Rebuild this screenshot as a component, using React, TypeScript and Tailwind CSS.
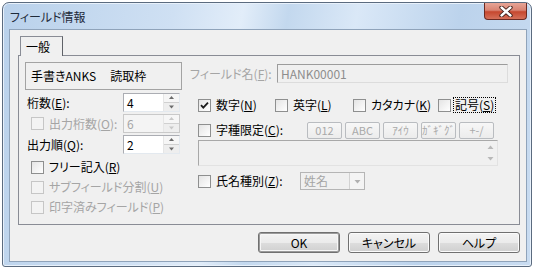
import React from "react";

const FONT = "font-['Noto_Sans_CJK_JP','Noto_Sans_CJK_SC',sans-serif] [font-feature-settings:'palt']";

function Check({ checked = false, disabled = false }: { checked?: boolean; disabled?: boolean }) {
  return (
    <span
      className={
        disabled
          ? "w-[13px] h-[13px] shrink-0 border border-[#c6c6c6] bg-[#f3f3f3] flex items-center justify-center"
          : "w-[13px] h-[13px] shrink-0 border border-[#8e8f8f] bg-[linear-gradient(135deg,#e4e4e4,#ffffff)] flex items-center justify-center"
      }
    >
      {checked && (
        <svg width="9" height="9" viewBox="0 0 9 9">
          <path d="M1 4.2 L3.3 6.6 L8 1.6" fill="none" stroke="#1b1b1b" strokeWidth="1.8" />
        </svg>
      )}
    </span>
  );
}

function Spin({ value, disabled = false }: { value: string; disabled?: boolean }) {
  const arrow = disabled ? "#c8c8c8" : "#6b6b6b";
  return (
    <div
      className={
        disabled
          ? "flex w-[57px] h-[19px] border border-[#c9c9c9] bg-[#f4f4f4] mr-[2px]"
          : "flex w-[57px] h-[19px] border border-[#abadb3] border-r-[#e3e9ef] border-b-[#e3e9ef] bg-white mr-[2px]"
      }
    >
      <div className={disabled ? "flex-1 pl-[3px] leading-[17px] text-[#a5a5a5]" : "flex-1 pl-[3px] leading-[17px] text-black"}>
        {value}
      </div>
      <div className="w-[16px] flex flex-col border-l border-[#e6e6e6]">
        <div className="flex-1 flex flex-col items-center justify-center bg-[#f6f6f6]">
          <svg width="7" height="6" viewBox="0 0 7 6">
            <path d="M3.5 1 L6 4 L1 4 Z" fill={arrow} />
          </svg>
        </div>
        <div className="h-px bg-[#d0d0d0]" />
        <div className="flex-1 flex flex-col items-center justify-center bg-[#eeeeee]">
          <svg width="7" height="6" viewBox="0 0 7 6">
            <path d="M1 1.5 L6 1.5 L3.5 4.5 Z" fill={arrow} />
          </svg>
        </div>
      </div>
    </div>
  );
}

function SmallBtn({ label }: { label: string }) {
  return (
    <div className="w-[35px] h-[17px] rounded-[2px] border border-[#b9bcc0] bg-[linear-gradient(#f7f7f7,#ececec)] text-[#a9a9a9] text-[11px] leading-[15px] flex items-center justify-center whitespace-nowrap">
      {label}
    </div>
  );
}

function DlgBtn({ label, primary = false }: { label: string; primary?: boolean }) {
  return (
    <div
      className={
        primary
          ? "w-[82px] h-[21px] rounded-[3px] border border-[#707070] shadow-[inset_0_0_0_1px_#9a9a9a,inset_0_0_0_2px_#f6f6f6] bg-[linear-gradient(#f3f3f3_0%,#ebebeb_50%,#dddddd_51%,#cfcfcf_100%)] flex items-center justify-center text-black"
          : "w-[82px] h-[21px] rounded-[3px] border border-[#707070] shadow-[inset_0_0_0_1px_#fbfbfb] bg-[linear-gradient(#f3f3f3_0%,#ebebeb_50%,#dddddd_51%,#cfcfcf_100%)] flex items-center justify-center text-black"
      }
    >
      {label}
    </div>
  );
}

export default function App() {
  return (
    <div className={`w-[537px] h-[269px] bg-white pl-[2px] pt-[2px] text-[12px] leading-[14px] text-black ${FONT}`}>
      <div className="w-[530px] h-[265px] rounded-t-[7px] rounded-b-[3px] border border-[#5b6b7f] bg-[linear-gradient(100deg,#b9d1eb_0%,#cfe0f3_30%,#e2edf9_42%,#c3d8ee_50%,#dae8f7_62%,#bcd3ec_80%,#c9dcf1_100%)] flex flex-col shadow-[inset_0_0_0_1px_#e8f1fb]">
        {/* title bar */}
        <div className="h-[26px] relative flex items-center pl-[7px]">
          <span className="text-[12px] text-[#1e2a3a] pt-[2px]">フィールド情報</span>
          <div className="absolute right-[4px] top-0 w-[43px] h-[17px] rounded-b-[4px] border border-t-0 border-[#6b2a22] bg-[linear-gradient(#e7a597_0%,#d98473_45%,#c6482f_55%,#d5705a_100%)] flex items-center justify-center">
            <svg width="14" height="11" viewBox="0 0 14 11">
              <path d="M2.5 1.5 L11.5 9.5 M11.5 1.5 L2.5 9.5" stroke="#3a1a14" strokeWidth="4.2" strokeLinecap="round" />
              <path d="M2.5 1.5 L11.5 9.5 M11.5 1.5 L2.5 9.5" stroke="#ffffff" strokeWidth="2.4" strokeLinecap="round" />
            </svg>
          </div>
        </div>

        {/* client area */}
        <div className="ml-[6px] mr-[4px] h-[233px] border border-[#8fa3ba] bg-[#f0f0f0] flex flex-col">
          {/* tab strip */}
          <div className="pt-[6px] pl-[10px] flex">
            <div className="relative z-10 -mb-px w-[43px] h-[20px] border border-b-0 border-[#898c95] border-r-[#5f6268] bg-[#f0f0f0] flex items-center pl-[5px]">
              一般
            </div>
          </div>
          <div className="ml-[8px] w-[502px] h-[170px] border border-[#898c95] flex pt-[6px] pl-[6px] whitespace-nowrap">
            {/* left column */}
            <div className="w-[157px] flex flex-col">
              <div className="h-[28px] border border-[#a3a3a3] flex items-center pl-[5px]">
                <span>手書きANKS</span>
                <span className="ml-[14px]">読取枠</span>
              </div>
              <div className="mt-[3px] h-[19px] flex items-center justify-between">
                <span className="pl-[2px]">
                  桁数(<span className="underline">E</span>):
                </span>
                <Spin value="4" />
              </div>
              <div className="mt-[2px] h-[19px] flex items-center justify-between">
                <span className="pl-[6px] flex items-center gap-[5px] text-[#a5a5a5]">
                  <Check disabled />
                  <span>
                    出力桁数(<span className="underline">O</span>):
                  </span>
                </span>
                <Spin value="6" disabled />
              </div>
              <div className="mt-[2px] h-[19px] flex items-center justify-between">
                <span className="pl-[2px]">
                  出力順(<span className="underline">Q</span>):
                </span>
                <Spin value="2" />
              </div>
              <div className="mt-[3px] h-[20px] flex items-center pl-[6px] gap-[5px]">
                <Check />
                <span>
                  フリー記入(<span className="underline">R</span>)
                </span>
              </div>
              <div className="h-[20px] flex items-center pl-[6px] gap-[5px] text-[#a5a5a5]">
                <Check disabled />
                <span>
                  サブフィールド分割(<span className="underline">U</span>)
                </span>
              </div>
              <div className="h-[20px] flex items-center pl-[6px] gap-[5px] text-[#a5a5a5]">
                <Check disabled />
                <span>
                  印字済みフィールド(<span className="underline">P</span>)
                </span>
              </div>
            </div>

            {/* right column */}
            <div className="ml-[8px] w-[318px] flex flex-col">
              <div className="mt-[2px] h-[19px] flex items-center">
                <span className="w-[87px] text-[#a5a5a5]">
                  フィールド名(<span className="underline">F</span>):
                </span>
                <div className="flex-1 h-[19px] border border-[#9c9c9c] border-r-[#dcdcdc] border-b-[#dcdcdc] bg-[#f0f0f0] pl-[3px] leading-[17px] text-[#8d8d8d]">
                  HANK00001
                </div>
              </div>

              <div className="mt-[12px] h-[20px] flex items-center pl-[8px]">
                <div className="w-[77px] flex items-center gap-[5px]">
                  <Check checked />
                  <span>
                    数字(<span className="underline">N</span>)
                  </span>
                </div>
                <div className="w-[78px] flex items-center gap-[5px]">
                  <Check />
                  <span>
                    英字(<span className="underline">L</span>)
                  </span>
                </div>
                <div className="w-[85px] flex items-center gap-[5px]">
                  <Check />
                  <span>
                    カタカナ(<span className="underline">K</span>)
                  </span>
                </div>
                <div className="flex items-center gap-[2px]">
                  <Check />
                  <span className="border border-dotted border-black px-[1px] leading-[14px]">
                    記号(<span className="underline">S</span>)
                  </span>
                </div>
              </div>

              <div className="mt-[6px] h-[18px] flex items-center pl-[8px]">
                <div className="w-[109px] flex items-center gap-[5px]">
                  <Check />
                  <span>
                    字種限定(<span className="underline">C</span>):
                  </span>
                </div>
                <div className="flex gap-[3px]">
                  <SmallBtn label="012" />
                  <SmallBtn label="ABC" />
                  <SmallBtn label="ｱｲｳ" />
                  <SmallBtn label="ｶﾞｷﾞｸﾞ" />
                  <SmallBtn label="+-/" />
                </div>
              </div>

              <div className="mt-[1px] ml-[8px] w-[300px] h-[26px] border border-[#a8a8a8] border-r-[#e2e2e2] border-b-[#e2e2e2] bg-[#f0f0f0] flex justify-end">
                <div className="w-[14px] flex flex-col items-center justify-between py-[4px]">
                  <svg width="7" height="5" viewBox="0 0 7 5">
                    <path d="M3.5 0.5 L6.5 4 L0.5 4 Z" fill="#b8b8b8" />
                  </svg>
                  <svg width="7" height="5" viewBox="0 0 7 5">
                    <path d="M0.5 1 L6.5 1 L3.5 4.5 Z" fill="#b8b8b8" />
                  </svg>
                </div>
              </div>

              <div className="mt-[6px] h-[18px] flex items-center pl-[8px]">
                <div className="w-[102px] flex items-center gap-[5px]">
                  <Check />
                  <span>
                    氏名種別(<span className="underline">Z</span>):
                  </span>
                </div>
                <div className="w-[65px] h-[18px] border border-[#b5b5b5] bg-[#f0f0f0] flex">
                  <span className="flex-1 pl-[3px] leading-[16px] text-[#a5a5a5]">姓名</span>
                  <div className="w-[15px] border-l border-[#d2d2d2] bg-[#f4f4f4] flex items-center justify-center">
                    <svg width="7" height="5" viewBox="0 0 7 5">
                      <path d="M0.5 1 L6.5 1 L3.5 4.5 Z" fill="#b0b0b0" />
                    </svg>
                  </div>
                </div>
              </div>
            </div>
          </div>

          {/* buttons */}
          <div className="mt-[7px] flex justify-end gap-[8px] pr-[6px]">
            <DlgBtn label="OK" primary />
            <DlgBtn label="キャンセル" />
            <DlgBtn label="ヘルプ" />
          </div>
        </div>
      </div>
    </div>
  );
}
